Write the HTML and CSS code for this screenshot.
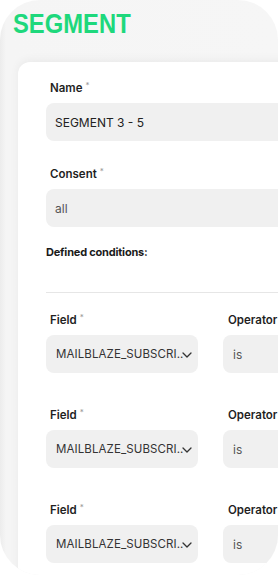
FILE: index.html
```html
<!DOCTYPE html>
<html>
<head>
<meta charset="utf-8">
<link rel="stylesheet" href="styles.css">
</head>
<body>
<div class="phone">
  <h1 class="title">SEGMENT</h1>
  <div class="card">
    <div class="group">
      <div class="label">Name <span class="req">*</span></div>
      <div class="input">SEGMENT 3 - 5</div>
    </div>
    <div class="group">
      <div class="label">Consent <span class="req">*</span></div>
      <div class="input muted">all</div>
    </div>
    <div class="section">Defined conditions:</div>
    <div class="divider"></div>
    <div class="cond">
      <div class="col">
        <div class="label">Field <span class="req">*</span></div>
        <div class="select"><span>MAILBLAZE_SUBSCRI..</span><svg class="chev" width="10" height="6" viewBox="0 0 10 6"><path d="M1 1 L5 5 L9 1" fill="none" stroke="#333" stroke-width="1.3" stroke-linecap="round" stroke-linejoin="round"/></svg></div>
      </div>
      <div class="col">
        <div class="label op">Operator</div>
        <div class="input muted op-in">is</div>
      </div>
    </div>
    <div class="cond">
      <div class="col">
        <div class="label">Field <span class="req">*</span></div>
        <div class="select"><span>MAILBLAZE_SUBSCRI..</span><svg class="chev" width="10" height="6" viewBox="0 0 10 6"><path d="M1 1 L5 5 L9 1" fill="none" stroke="#333" stroke-width="1.3" stroke-linecap="round" stroke-linejoin="round"/></svg></div>
      </div>
      <div class="col">
        <div class="label op">Operator</div>
        <div class="input muted op-in">is</div>
      </div>
    </div>
    <div class="cond">
      <div class="col">
        <div class="label">Field <span class="req">*</span></div>
        <div class="select"><span>MAILBLAZE_SUBSCRI..</span><svg class="chev" width="10" height="6" viewBox="0 0 10 6"><path d="M1 1 L5 5 L9 1" fill="none" stroke="#333" stroke-width="1.3" stroke-linecap="round" stroke-linejoin="round"/></svg></div>
      </div>
      <div class="col">
        <div class="label op">Operator</div>
        <div class="input muted op-in">is</div>
      </div>
    </div>
  </div>
</div>
</body>
</html>
```
FILE: styles.css
```css
html, body {
  margin: 0;
  padding: 0;
  background: #ffffff;
  overflow: hidden;
  width: 279px;
  height: 582px;
}
body {
  font-family: Inter, "Noto Sans", sans-serif;
  color: #222;
}
.phone {
  width: 278px;
  height: 575px;
  background: linear-gradient(90deg, #ececec 0px, #f5f5f5 6px, #f6f6f6 100%);
  border-radius: 40px;
  display: flex;
  flex-direction: column;
  overflow: hidden;
}
.title {
  flex: none;
  margin: 0;
  padding: 8px 0 0 13px;
  height: 53px;
  box-sizing: border-box;
  font-family: "Liberation Sans", Arial, sans-serif;
  font-weight: 700;
  font-size: 28px;
  line-height: 32px;
  color: #1ed87c;
  transform: scaleX(0.85);
  transform-origin: 13px 0;
}
.card {
  flex: none;
  margin-left: 18px;
  margin-top: 9px;
  width: 320px;
  height: 540px;
  background: #fff;
  border-radius: 12px 12px 0 0;
  box-shadow: 0 -2px 10px rgba(0, 0, 0, 0.05);
  padding: 19px 0 0 28px;
  box-sizing: border-box;
  overflow: hidden;
}
.group {
  display: flex;
  flex-direction: column;
  gap: 8px;
  margin-bottom: 26px;
}
.group + .group {
  margin-bottom: 18px;
}
.label {
  font-size: 11.5px;
  line-height: 14px;
  height: 14px;
  font-weight: 600;
  padding-left: 4px;
  color: #1f1f1f;
}
.req {
  font-size: 8px;
  line-height: 0;
  color: #999;
  vertical-align: 4px;
  font-weight: 400;
}
.input, .select {
  height: 38px;
  background: #f0f0f0;
  border-radius: 8px;
  display: flex;
  align-items: center;
  padding-left: 9px;
  font-size: 12px;
  color: #222;
  box-sizing: border-box;
}
.muted {
  color: #555;
}
.section {
  font-size: 11px;
  line-height: 14px;
  font-weight: 700;
  color: #1a1a1a;
  letter-spacing: -0.2px;
}
.divider {
  height: 1px;
  background: #e6e6e6;
  margin-top: 33px;
  margin-bottom: 20px;
}
.cond {
  display: grid;
  grid-template-columns: 152px 1fr;
  column-gap: 25px;
  margin-bottom: 35px;
}
.col {
  display: flex;
  flex-direction: column;
  gap: 8px;
}
.select {
  padding-left: 10px;
  padding-right: 6px;
  justify-content: space-between;
  font-size: 11.5px;
  color: #333;
  letter-spacing: 0.1px;
  white-space: nowrap;
  overflow: hidden;
}
.select span {
  overflow: hidden;
}
.chev {
  flex: none;
  margin-left: -1px;
  margin-top: 2px;
}
.op {
  padding-left: 5px;
}
.op-in {
  padding-left: 10px;
}
```
